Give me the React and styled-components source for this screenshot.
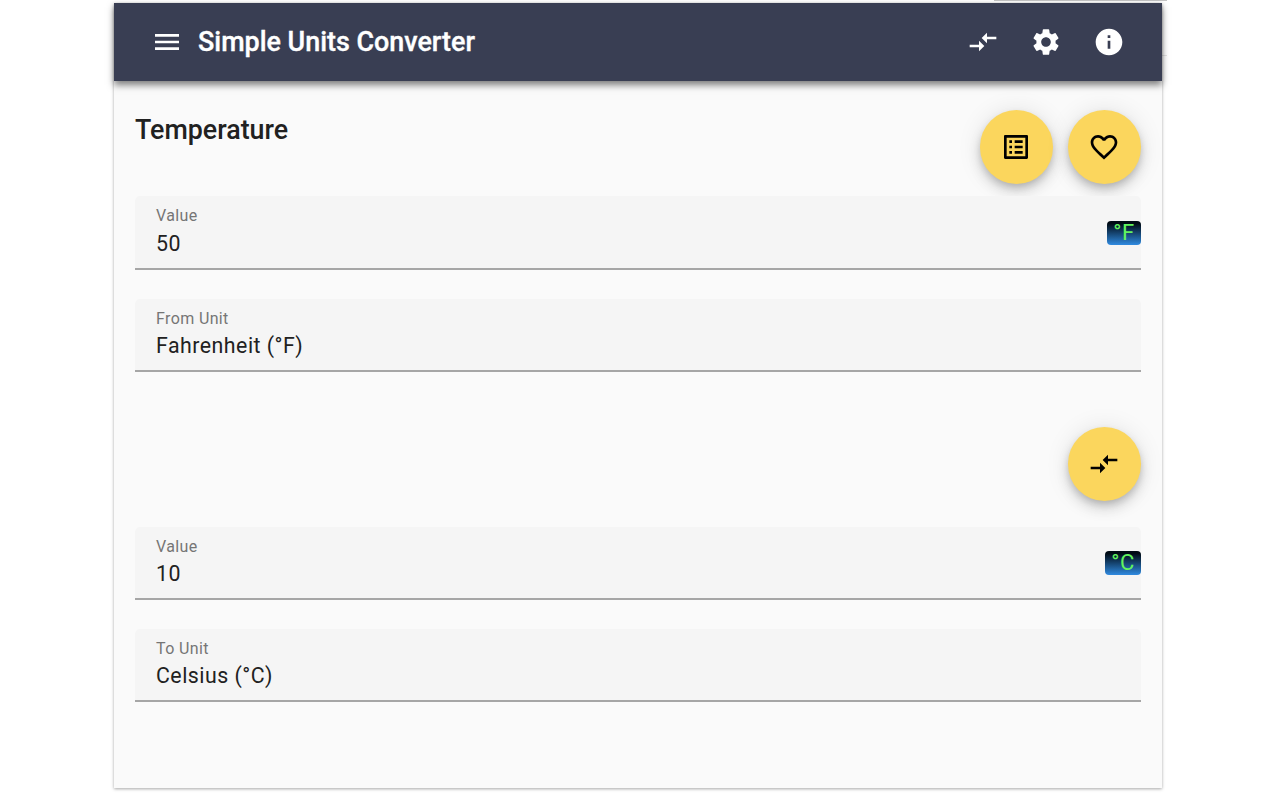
import React from "react";
import styled, { createGlobalStyle } from "styled-components";
import {
  MdMenu,
  MdCompareArrows,
  MdSettings,
  MdInfo,
  MdFavoriteBorder,
  MdOutlineListAlt,
} from "react-icons/md";

const GlobalStyle = createGlobalStyle`
  html, body {
    margin: 0;
    padding: 0;
    background: #ffffff;
    font-family: Roboto, "Liberation Sans", sans-serif;
    overflow: hidden;
  }
`;

const Page = styled.div`
  width: 1280px;
  height: 800px;
  position: relative;
  padding-top: 3px;
  box-sizing: border-box;
`;

// sliver of the page behind the popup, peeking out at the top right
const BehindEdge = styled.div`
  position: absolute;
  left: 994px;
  top: 0;
  width: 173px;
  height: 54px;
  border-top: 1px solid #c4c4c4;
  border-bottom: 1px solid #e6e6e6;
`;

const Shell = styled.div`
  width: 1048px;
  height: 785px;
  margin-left: 114px;
  background: #fafafa;
  box-shadow: 0 1px 3px rgba(0, 0, 0, 0.35);
  display: flex;
  flex-direction: column;
  position: relative;
`;

const Toolbar = styled.header`
  height: 78px;
  flex: none;
  background: #393e53;
  color: #fff;
  display: flex;
  align-items: center;
  padding: 0 21.5px 0 37px;
  box-shadow: 0 4px 7px rgba(0, 0, 0, 0.5);
  position: relative;
  z-index: 1;
`;

const Title = styled.h1`
  margin: 0 0 0 15px;
  font-size: 26.9px;
  font-weight: 500;
  -webkit-text-stroke: 0.35px #fff;
  flex: 1;
`;

const ToolIcon = styled.span`
  width: 63px;
  display: flex;
  justify-content: center;
  font-size: 32px;
  line-height: 0;
`;

const MenuIcon = styled.span`
  display: flex;
  font-size: 32px;
  line-height: 0;
`;

const Content = styled.main`
  flex: 1;
  padding: 29px 21px 0;
  display: flex;
  flex-direction: column;
`;

const TopRow = styled.div`
  height: 86.3px;
  flex: none;
  display: flex;
  align-items: flex-start;
  justify-content: space-between;
`;

const Heading = styled.h2`
  margin: 5px 0 0;
  font-size: 26.8px;
  line-height: 31px;
  font-weight: 500;
  color: #212121;
`;

const Fabs = styled.div`
  display: flex;
  gap: 14.5px;
`;

const Fab = styled.button`
  width: 73.5px;
  height: 73.5px;
  border: 0;
  padding: 0;
  border-radius: 50%;
  background: #fbd65d;
  color: #000;
  font-size: 32px;
  display: flex;
  align-items: center;
  justify-content: center;
  box-shadow: 0 4px 7px -1px rgba(0, 0, 0, 0.16), 0 8px 13px 0 rgba(0, 0, 0, 0.12),
    0 1px 24px 0 rgba(0, 0, 0, 0.1);
`;

const SwapRow = styled.div`
  height: 154.3px;
  flex: none;
  box-sizing: border-box;
  padding-top: 55px;
  display: flex;
  align-items: flex-start;
  justify-content: flex-end;
`;

const Field = styled.div`
  height: 73.3px;
  flex: none;
  box-sizing: border-box;
  background: #f5f5f5;
  border-bottom: 2px solid #a6a6a6;
  border-radius: 5px 5px 0 0;
  padding: 10px 0 0 21px;
  position: relative;
  margin-bottom: ${(p) => p.$gap || 0}px;
`;

const Label = styled.div`
  font-size: 16px;
  line-height: 20px;
  letter-spacing: 0.37px;
  color: #757575;
`;

const Value = styled.div`
  font-size: 21.33px;
  line-height: 30px;
  margin-top: 2.5px;
  letter-spacing: 0.49px;
  color: #212121;
`;

const UnitBadge = styled.span`
  position: absolute;
  right: 0;
  top: 24.6px;
  height: 24px;
  width: ${(p) => p.$width}px;
  text-align: center;
  border-radius: 4px;
  background: linear-gradient(#000a14 10%, #2f8ae0);
  color: #62f45e;
  font-size: 22px;
  letter-spacing: 0.6px;
  line-height: 24px;
`;

export default function App() {
  return (
    <Page>
      <GlobalStyle />
      <BehindEdge />
      <Shell>
        <Toolbar>
          <MenuIcon>
            <MdMenu />
          </MenuIcon>
          <Title>Simple Units Converter</Title>
          <ToolIcon>
            <MdCompareArrows />
          </ToolIcon>
          <ToolIcon>
            <MdSettings />
          </ToolIcon>
          <ToolIcon>
            <MdInfo />
          </ToolIcon>
        </Toolbar>
        <Content>
          <TopRow>
            <Heading>Temperature</Heading>
            <Fabs>
              <Fab>
                <MdOutlineListAlt />
              </Fab>
              <Fab>
                <MdFavoriteBorder />
              </Fab>
            </Fabs>
          </TopRow>
          <Field $gap={29.4}>
            <Label>Value</Label>
            <Value>50</Value>
            <UnitBadge $width={34}>°F</UnitBadge>
          </Field>
          <Field>
            <Label>From Unit</Label>
            <Value>Fahrenheit (°F)</Value>
          </Field>
          <SwapRow>
            <Fab>
              <MdCompareArrows />
            </Fab>
          </SwapRow>
          <Field $gap={28.7}>
            <Label>Value</Label>
            <Value>10</Value>
            <UnitBadge $width={36}>°C</UnitBadge>
          </Field>
          <Field>
            <Label>To Unit</Label>
            <Value>Celsius (°C)</Value>
          </Field>
        </Content>
      </Shell>
    </Page>
  );
}
